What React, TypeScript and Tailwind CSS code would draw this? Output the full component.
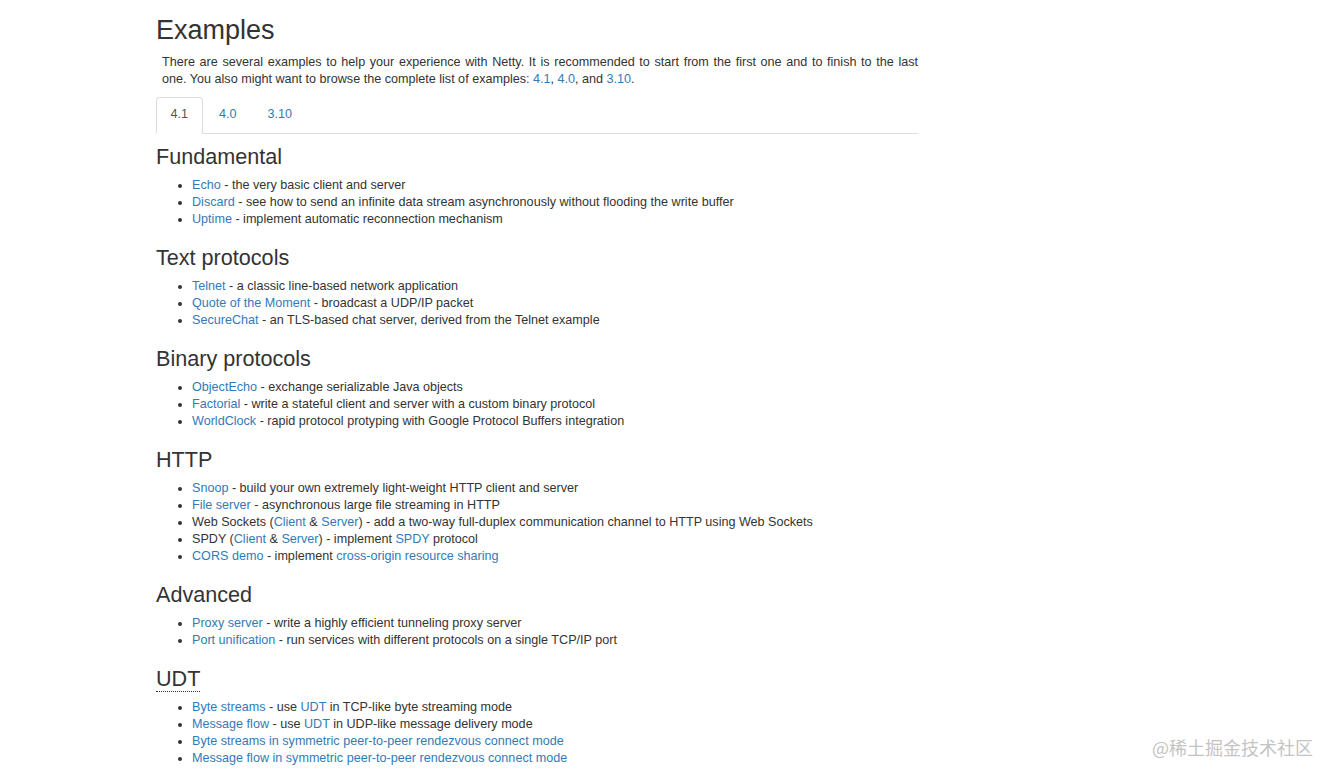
import React from "react";

const L = ({ children }: { children: React.ReactNode }) => (
  <a href="#" className="text-[#337ab7] no-underline">
    {children}
  </a>
);

const H = ({ children, first }: { children: React.ReactNode; first?: boolean }) => (
  <h3
    className={`${first ? "mt-[11px]" : "mt-[18px]"} mb-[8px] text-[21.6px] leading-[24px] font-normal text-[#333]`}
  >
    {children}
  </h3>
);

const UL = ({ children }: { children: React.ReactNode }) => (
  <ul className="list-disc pl-[36px] m-0">{children}</ul>
);

export default function App() {
  return (
    <div
      className="relative min-h-[780px] bg-white text-[#333] text-[12.6px] leading-[17px]"
      style={{ fontFamily: '"Liberation Sans", Arial, sans-serif' }}
    >
      <div className="pl-[156px] pb-[20px]">
        <div className="w-[762px]">
          <h1 className="pt-[16px] m-0 text-[27px] leading-[29.7px] font-normal text-[#333]">
            Examples
          </h1>
          <p className="mt-[8px] mb-[9.7px] pl-[6px] text-justify">
            There are several examples to help your experience with Netty. It is recommended to
            start from the first one and to finish to the last one. You also might want to browse
            the complete list of examples: <L>4.1</L>, <L>4.0</L>, and <L>3.10</L>.
          </p>
          <ul className="flex border-b border-[#ddd] m-0 p-0 list-none">
            <li className="-mb-px mr-[2px]">
              <a
                href="#"
                className="block pt-[8px] pb-[10px] px-[13.5px] border border-[#ddd] border-b-transparent rounded-t-[4px] bg-white text-[#555]"
              >
                4.1
              </a>
            </li>
            <li className="-mb-px mr-[2px]">
              <a
                href="#"
                className="block pt-[8px] pb-[10px] px-[13.5px] border border-transparent rounded-t-[4px] text-[#337ab7]"
              >
                4.0
              </a>
            </li>
            <li className="-mb-px mr-[2px]">
              <a
                href="#"
                className="block pt-[8px] pb-[10px] px-[13.5px] border border-transparent rounded-t-[4px] text-[#337ab7]"
              >
                3.10
              </a>
            </li>
          </ul>

          <H first>Fundamental</H>
          <UL>
            <li>
              <L>Echo</L> - the very basic client and server
            </li>
            <li>
              <L>Discard</L> - see how to send an infinite data stream asynchronously without
              flooding the write buffer
            </li>
            <li>
              <L>Uptime</L> - implement automatic reconnection mechanism
            </li>
          </UL>

          <H>Text protocols</H>
          <UL>
            <li>
              <L>Telnet</L> - a classic line-based network application
            </li>
            <li>
              <L>Quote of the Moment</L> - broadcast a UDP/IP packet
            </li>
            <li>
              <L>SecureChat</L> - an TLS-based chat server, derived from the Telnet example
            </li>
          </UL>

          <H>Binary protocols</H>
          <UL>
            <li>
              <L>ObjectEcho</L> - exchange serializable Java objects
            </li>
            <li>
              <L>Factorial</L> - write a stateful client and server with a custom binary protocol
            </li>
            <li>
              <L>WorldClock</L> - rapid protocol protyping with Google Protocol Buffers integration
            </li>
          </UL>

          <H>HTTP</H>
          <UL>
            <li>
              <L>Snoop</L> - build your own extremely light-weight HTTP client and server
            </li>
            <li>
              <L>File server</L> - asynchronous large file streaming in HTTP
            </li>
            <li>
              Web Sockets (<L>Client</L> &amp; <L>Server</L>) - add a two-way full-duplex
              communication channel to HTTP using Web Sockets
            </li>
            <li>
              SPDY (<L>Client</L> &amp; <L>Server</L>) - implement <L>SPDY</L> protocol
            </li>
            <li>
              <L>CORS demo</L> - implement <L>cross-origin resource sharing</L>
            </li>
          </UL>

          <H>Advanced</H>
          <UL>
            <li>
              <L>Proxy server</L> - write a highly efficient tunneling proxy server
            </li>
            <li>
              <L>Port unification</L> - run services with different protocols on a single TCP/IP
              port
            </li>
          </UL>

          <H>
            <abbr
              title="UDP-based Data Transfer Protocol"
              className="no-underline border-b border-dotted border-[#333] cursor-help"
            >
              UDT
            </abbr>
          </H>
          <UL>
            <li>
              <L>Byte streams</L> - use <L>UDT</L> in TCP-like byte streaming mode
            </li>
            <li>
              <L>Message flow</L> - use <L>UDT</L> in UDP-like message delivery mode
            </li>
            <li>
              <L>Byte streams in symmetric peer-to-peer rendezvous connect mode</L>
            </li>
            <li>
              <L>Message flow in symmetric peer-to-peer rendezvous connect mode</L>
            </li>
          </UL>
        </div>
      </div>

      <div
        className="absolute left-[1152px] top-[735px] text-[18px] leading-[24px] text-[#c4c4c4] whitespace-nowrap"
        style={{ fontFamily: '"Noto Sans CJK SC", "Liberation Sans", sans-serif' }}
      >
        @稀土掘金技术社区
      </div>
    </div>
  );
}
